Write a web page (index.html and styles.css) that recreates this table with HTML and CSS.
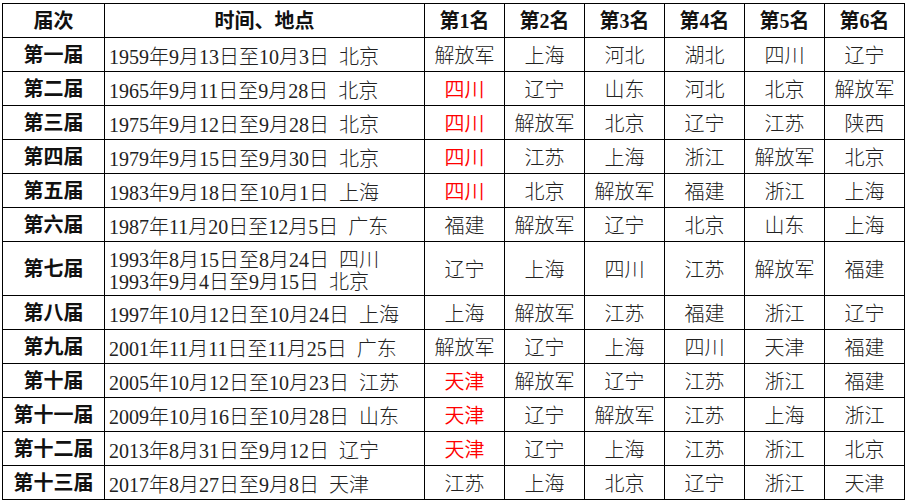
FILE: index.html
```html
<!DOCTYPE html>
<html lang="zh-CN">
<head>
<meta charset="utf-8">
<title>全运会足球</title>
<link rel="stylesheet" href="styles.css">
</head>
<body>
<table class="results">
  <colgroup>
    <col class="c-session">
    <col class="c-date">
    <col class="c-rank"><col class="c-rank"><col class="c-rank">
    <col class="c-rank"><col class="c-rank"><col class="c-rank">
  </colgroup>
  <thead>
    <tr>
      <th>届次</th><th>时间、地点</th>
      <th>第1名</th><th>第2名</th><th>第3名</th><th>第4名</th><th>第5名</th><th>第6名</th>
    </tr>
  </thead>
  <tbody>
    <tr><th>第一届</th><td class="date">1959年9月13日至10月3日&nbsp;&nbsp;北京</td><td>解放军</td><td>上海</td><td>河北</td><td>湖北</td><td>四川</td><td>辽宁</td></tr>
    <tr><th>第二届</th><td class="date">1965年9月11日至9月28日&nbsp;&nbsp;北京</td><td class="red">四川</td><td>辽宁</td><td>山东</td><td>河北</td><td>北京</td><td>解放军</td></tr>
    <tr><th>第三届</th><td class="date">1975年9月12日至9月28日&nbsp;&nbsp;北京</td><td class="red">四川</td><td>解放军</td><td>北京</td><td>辽宁</td><td>江苏</td><td>陕西</td></tr>
    <tr><th>第四届</th><td class="date">1979年9月15日至9月30日&nbsp;&nbsp;北京</td><td class="red">四川</td><td>江苏</td><td>上海</td><td>浙江</td><td>解放军</td><td>北京</td></tr>
    <tr><th>第五届</th><td class="date">1983年9月18日至10月1日&nbsp;&nbsp;上海</td><td class="red">四川</td><td>北京</td><td>解放军</td><td>福建</td><td>浙江</td><td>上海</td></tr>
    <tr><th>第六届</th><td class="date">1987年11月20日至12月5日&nbsp;&nbsp;广东</td><td>福建</td><td>解放军</td><td>辽宁</td><td>北京</td><td>山东</td><td>上海</td></tr>
    <tr class="tall"><th>第七届</th><td class="date">1993年8月15日至8月24日&nbsp;&nbsp;四川<br>1993年9月4日至9月15日&nbsp;&nbsp;北京</td><td>辽宁</td><td>上海</td><td>四川</td><td>江苏</td><td>解放军</td><td>福建</td></tr>
    <tr><th>第八届</th><td class="date">1997年10月12日至10月24日&nbsp;&nbsp;上海</td><td>上海</td><td>解放军</td><td>江苏</td><td>福建</td><td>浙江</td><td>辽宁</td></tr>
    <tr><th>第九届</th><td class="date">2001年11月11日至11月25日&nbsp;&nbsp;广东</td><td>解放军</td><td>辽宁</td><td>上海</td><td>四川</td><td>天津</td><td>福建</td></tr>
    <tr><th>第十届</th><td class="date">2005年10月12日至10月23日&nbsp;&nbsp;江苏</td><td class="red">天津</td><td>解放军</td><td>辽宁</td><td>江苏</td><td>浙江</td><td>福建</td></tr>
    <tr><th>第十一届</th><td class="date">2009年10月16日至10月28日&nbsp;&nbsp;山东</td><td class="red">天津</td><td>辽宁</td><td>解放军</td><td>江苏</td><td>上海</td><td>浙江</td></tr>
    <tr><th>第十二届</th><td class="date">2013年8月31日至9月12日&nbsp;&nbsp;辽宁</td><td class="red">天津</td><td>辽宁</td><td>上海</td><td>江苏</td><td>浙江</td><td>北京</td></tr>
    <tr><th>第十三届</th><td class="date">2017年8月27日至9月8日&nbsp;&nbsp;天津</td><td>江苏</td><td>上海</td><td>北京</td><td>辽宁</td><td>浙江</td><td>天津</td></tr>
  </tbody>
</table>
</body>
</html>
```

FILE: styles.css
```css
html, body {
  margin: 0;
  padding: 0;
  background: #ffffff;
}

body {
  padding: 3px 0 0 2px;
  font-family: "Liberation Serif", "Noto Sans CJK SC", serif;
  color: #1a1a1a;
}

.results {
  border-collapse: collapse;
  table-layout: fixed;
  width: 902px;
  font-size: 20px;
}

.c-session { width: 102px; }
.c-date { width: 320px; }
.c-rank { width: 80px; }

.results th,
.results td {
  border: 1px solid #000000;
  padding: 0;
  text-align: center;
  vertical-align: middle;
  white-space: nowrap;
  overflow: hidden;
  line-height: 22px;
}

.results tr {
  height: 34px;
}

.results tr.tall {
  height: 54px;
}

.results th {
  font-weight: 700;
  color: #111111;
}

.results td {
  font-weight: 300;
  color: #222222;
  padding-top: 2px;
}

.results td.date {
  text-align: left;
  padding-left: 4px;
  padding-top: 4px;
}

.results td.red {
  font-weight: 350;
  color: #ff0000;
}
```
